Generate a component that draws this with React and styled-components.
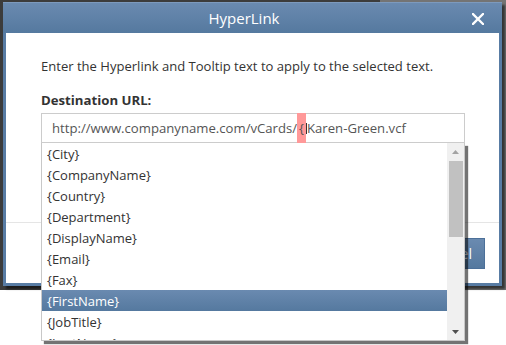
import React from 'react';
import styled, { createGlobalStyle } from 'styled-components';

const Global = createGlobalStyle`
  html, body { margin: 0; padding: 0; background: #fff; }
  body {
    font-family: "Open Sans", "Liberation Sans", sans-serif;
    overflow: hidden;
  }
  * { box-sizing: border-box; }
`;

const Page = styled.div`
  position: relative;
  width: 506px;
  height: 345px;
  overflow: hidden;
  background: #fff;
`;

const Backdrop = styled.div`
  height: 290px;
  background: linear-gradient(to right, #3c3c3c 0, #3c3c3c 380px, #747474 380px);
`;

const Dialog = styled.section`
  position: absolute;
  left: 3px;
  top: 2px;
  width: 499px;
  height: 284px;
  display: flex;
  flex-direction: column;
  padding: 0 3px 3px;
  border-top: 1px solid #7d9abd;
  background: linear-gradient(#6a8ab0 0, #55799f 30px, #587ca4 30px);
  box-shadow: 3px 3px 2px rgba(0, 0, 0, 0.55);
`;

const TitleBar = styled.header`
  height: 30px;
  display: flex;
  align-items: center;
  color: #fff;
`;

const Title = styled.h1`
  flex: 1;
  margin: 0;
  padding-left: 10px;
  text-align: center;
  font-size: 15px;
  font-weight: 400;
  line-height: 30px;
`;

const CloseButton = styled.button`
  width: 12px;
  height: 12px;
  margin: 1px 15px 0 0;
  padding: 0;
  border: 0;
  background: none;
  display: flex;
  cursor: pointer;
`;

const Body = styled.div`
  flex: 1;
  background: #fff;
  display: flex;
  flex-direction: column;
`;

const Content = styled.div`
  flex: 1;
  padding: 24px 35px 0;
  color: #333;
  font-size: 13px;
`;

const Description = styled.p`
  margin: 0;
  line-height: 18px;
  font-size: 13.05px;
`;

const Label = styled.label`
  display: block;
  margin-top: 16px;
  line-height: 18px;
  font-weight: 700;
  font-size: 13.2px;
`;

const InputWrap = styled.div`
  position: relative;
  width: 424px;
  margin-top: 4px;
`;

const Input = styled.div`
  height: 30px;
  display: flex;
  align-items: stretch;
  padding-left: 10px;
  border: 1px solid #cccccc;
  color: #555;
  font-size: 13.15px;
  white-space: nowrap;
`;

const Segment = styled.span`
  display: flex;
  align-items: center;
`;

const Mark = styled(Segment)`
  padding: 0 2px;
  margin: -1px 0;
  background: #ff9999;
`;

const Caret = styled.span`
  align-self: center;
  width: 1px;
  height: 11px;
  margin-top: 1px;
  background: #333;
`;

const List = styled.div`
  position: absolute;
  top: 100%;
  left: 0;
  width: 100%;
  height: 198px;
  display: flex;
  background: #fff;
  border: 1px solid #c8c8c8;
  border-top: 0;
  box-shadow: 3px 3px 1px rgba(0, 0, 0, 0.55);
  z-index: 2;
`;

const Items = styled.ul`
  flex: 1;
  margin: 0;
  padding: 0;
  list-style: none;
  overflow: hidden;
`;

const Item = styled.li`
  height: 21px;
  line-height: 22px;
  padding-left: 5px;
  font-size: 13px;
  color: ${p => (p.$selected ? '#fff' : '#333')};
  background: ${p => (p.$selected ? 'linear-gradient(#6a8ab0, #55799f)' : 'transparent')};
`;

const Scrollbar = styled.div`
  width: 17px;
  display: flex;
  flex-direction: column;
  background: #f0f0f0;
`;

const Arrow = styled.div`
  height: 17px;
  display: flex;
  align-items: center;
  justify-content: center;
`;

const Track = styled.div`
  flex: 1;
  padding: 1px 1px 0 2px;
`;

const Thumb = styled.div`
  height: 76px;
  background: #c1c1c1;
`;

const Footer = styled.footer`
  height: 61px;
  display: flex;
  align-items: center;
  justify-content: flex-end;
  gap: 8px;
  padding: 0 14px 0 0;
  border-top: 1px solid #e5e5e5;
`;

const Button = styled.button`
  height: 31px;
  padding: 0 12px;
  border: 1px solid #4c7099;
  background: linear-gradient(#6a8ab0, #55799f);
  color: #fff;
  font-family: inherit;
  font-size: 14px;
`;

const fields = [
  'City', 'CompanyName', 'Country', 'Department', 'DisplayName', 'Email',
  'Fax', 'FirstName', 'JobTitle', 'LastName',
];

export default function App() {
  return (
    <Page>
      <Global />
      <Backdrop />
      <Dialog>
        <TitleBar>
          <Title>HyperLink</Title>
          <CloseButton aria-label="Close">
            <svg width="12" height="12" viewBox="0 0 12 12">
              <path d="M1 1 L11 11 M11 1 L1 11" stroke="#fff" strokeWidth="2.3" strokeLinecap="square" />
            </svg>
          </CloseButton>
        </TitleBar>
        <Body>
          <Content>
            <Description>Enter the Hyperlink and Tooltip text to apply to the selected text.</Description>
            <Label>Destination URL:</Label>
            <InputWrap>
              <Input>
                <Segment>http://www.companyname.com/vCards/</Segment>
                <Mark>{'{'}</Mark>
                <Caret />
                <Segment>Karen-Green.vcf</Segment>
              </Input>
              <List>
                <Items>
                  {fields.map(f => (
                    <Item key={f} $selected={f === 'FirstName'}>{`{${f}}`}</Item>
                  ))}
                </Items>
                <Scrollbar>
                  <Arrow>
                    <svg width="7" height="4" viewBox="0 0 7 4"><path d="M0 4 L3.5 0 L7 4 Z" fill="#a3a3a3" /></svg>
                  </Arrow>
                  <Track><Thumb /></Track>
                  <Arrow>
                    <svg width="7" height="4" viewBox="0 0 7 4"><path d="M0 0 L7 0 L3.5 4 Z" fill="#505050" /></svg>
                  </Arrow>
                </Scrollbar>
              </List>
            </InputWrap>
          </Content>
          <Footer>
            <Button>OK</Button>
            <Button>Cancel</Button>
          </Footer>
        </Body>
      </Dialog>
    </Page>
  );
}
